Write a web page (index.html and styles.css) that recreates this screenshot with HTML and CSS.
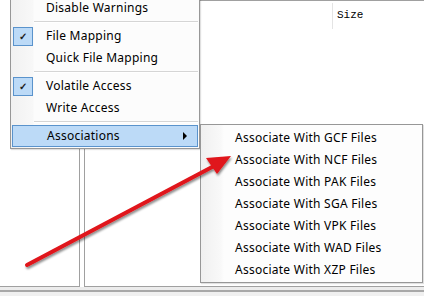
FILE: index.html
```html
<!DOCTYPE html>
<html lang="en">
<head>
    <meta charset="UTF-8">
    <title>Associations</title>
    <link rel="stylesheet" href="styles.css">
</head>
<body>
    <div class="window">
        <div class="panes">
            <div class="tree-pane"></div>
            <div class="list-pane">
                <div class="list-header">
                    <div class="col col-name"></div>
                    <div class="col col-size">Size</div>
                </div>
            </div>
        </div>
        <div class="status-bar"></div>
    </div>

    <!-- options menu, opened -->
    <div class="menu main-menu">
        <div class="item">Disable Warnings</div>
        <div class="sep"></div>
        <div class="item checked"><span class="check">&#10003;</span>File Mapping</div>
        <div class="item">Quick File Mapping</div>
        <div class="sep"></div>
        <div class="item checked"><span class="check">&#10003;</span>Volatile Access</div>
        <div class="item">Write Access</div>
        <div class="sep"></div>
        <div class="item active">Associations<span class="sub-arrow"></span></div>
    </div>

    <div class="menu sub-menu">
        <div class="item">Associate With GCF Files</div>
        <div class="item">Associate With NCF Files</div>
        <div class="item">Associate With PAK Files</div>
        <div class="item">Associate With SGA Files</div>
        <div class="item">Associate With VPK Files</div>
        <div class="item">Associate With WAD Files</div>
        <div class="item">Associate With XZP Files</div>
    </div>

    <svg class="pointer" width="424" height="296" viewBox="0 0 424 296">
        <defs>
            <filter id="shade" x="-10%" y="-10%" width="120%" height="130%">
                <feDropShadow dx="1" dy="2" stdDeviation="1.2" flood-color="#000" flood-opacity="0.45"/>
            </filter>
        </defs>
        <g filter="url(#shade)">
            <line x1="27" y1="265" x2="214" y2="166" stroke="#e0141a" stroke-width="4" stroke-linecap="round"/>
            <polygon points="231,156 206,158 217,174" fill="#e0141a"/>
        </g>
    </svg>
</body>
</html>
```

FILE: styles.css
```css
/* окно под меню */
body {
    margin: 0;
    width: 424px;
    height: 296px;
    overflow: hidden;
    background: #fff;
    font-family: "Noto Sans", "Open Sans", sans-serif;
    position: relative;
}

.window {
    display: flex;
    flex-direction: column;
    height: 100%;
}

.panes {
    display: flex;
    gap: 4px;
    height: 287px;
}

.tree-pane {
    width: 79px;
    border-right: 1px solid #a0a0a0;
    border-bottom: 1px solid #a0a0a0;
}

.list-pane {
    flex: 1;
    border: 1px solid #a0a0a0;
    border-right: none;
    background: #fff;
}

.list-header {
    display: flex;
    height: 28px;
}

.col-name {
    width: 247px;
    border-right: 1px solid #e4e4e4;
    margin-top: 2px;
}

.col-size {
    padding: 8px 0 0 4px;
    font-family: "Liberation Mono", "DejaVu Sans Mono", monospace;
    font-size: 11px;
    color: #000;
}

.status-bar {
    flex: 1;
    background: #f0f0f0;
    border-top: 3px solid #ececec;
    box-shadow: inset 0 2px 0 #a8a8a8;
}

/* меню */
.menu {
    position: absolute;
    background: #fcfcfc;
    border: 1px solid #979797;
    font-size: 12px;
    letter-spacing: 0.25px;
    color: #000;
    box-shadow: 1px 1px 1px rgba(0,0,0,0.12);
}

.main-menu {
    left: 10px;
    top: -4px;
    width: 188px;
    padding: 0 0 1px 0;
    background: linear-gradient(to right, #f1f1f1 0, #f8f8f8 22px, #fcfcfc 23px);
}

.sub-menu {
    left: 200px;
    top: 124px;
    width: 221px;
    padding: 2px 0 1px 0;
    background: linear-gradient(to right, #f0f0f0 0, #f9f9f9 20px, #fdfdfd 23px);
}

.item {
    position: relative;
    height: 22px;
    line-height: 22px;
    padding-left: 35px;
    white-space: nowrap;
}

.sub-menu .item {
    padding-left: 34px;
}

.item.active {
    background: #bcdaf7;
    border: 1px solid #5a93cc;
    height: 20px;
    line-height: 20px;
    margin: 0 1px;
    padding-left: 34px;
}

.sep {
    height: 6px;
    margin-left: 23px;
    background: linear-gradient(#fcfcfc 2px, #d5d5d5 2px, #d5d5d5 3px, #fff 3px, #fff 4px, #fcfcfc 4px);
    margin-right: 1px;
}

.check {
    position: absolute;
    left: 2px;
    top: 2px;
    width: 18px;
    height: 17px;
    line-height: 17px;
    text-align: center;
    background: #bcdaf7;
    border: 1px solid #5a93cc;
    font-size: 10px;
    font-weight: bold;
    color: #202020;
}

.sub-arrow {
    position: absolute;
    right: 10px;
    top: 6px;
    width: 0;
    height: 0;
    border-top: 4px solid transparent;
    border-bottom: 4px solid transparent;
    border-left: 4px solid #000;
}

.pointer {
    position: absolute;
    left: 0;
    top: 0;
}
```
